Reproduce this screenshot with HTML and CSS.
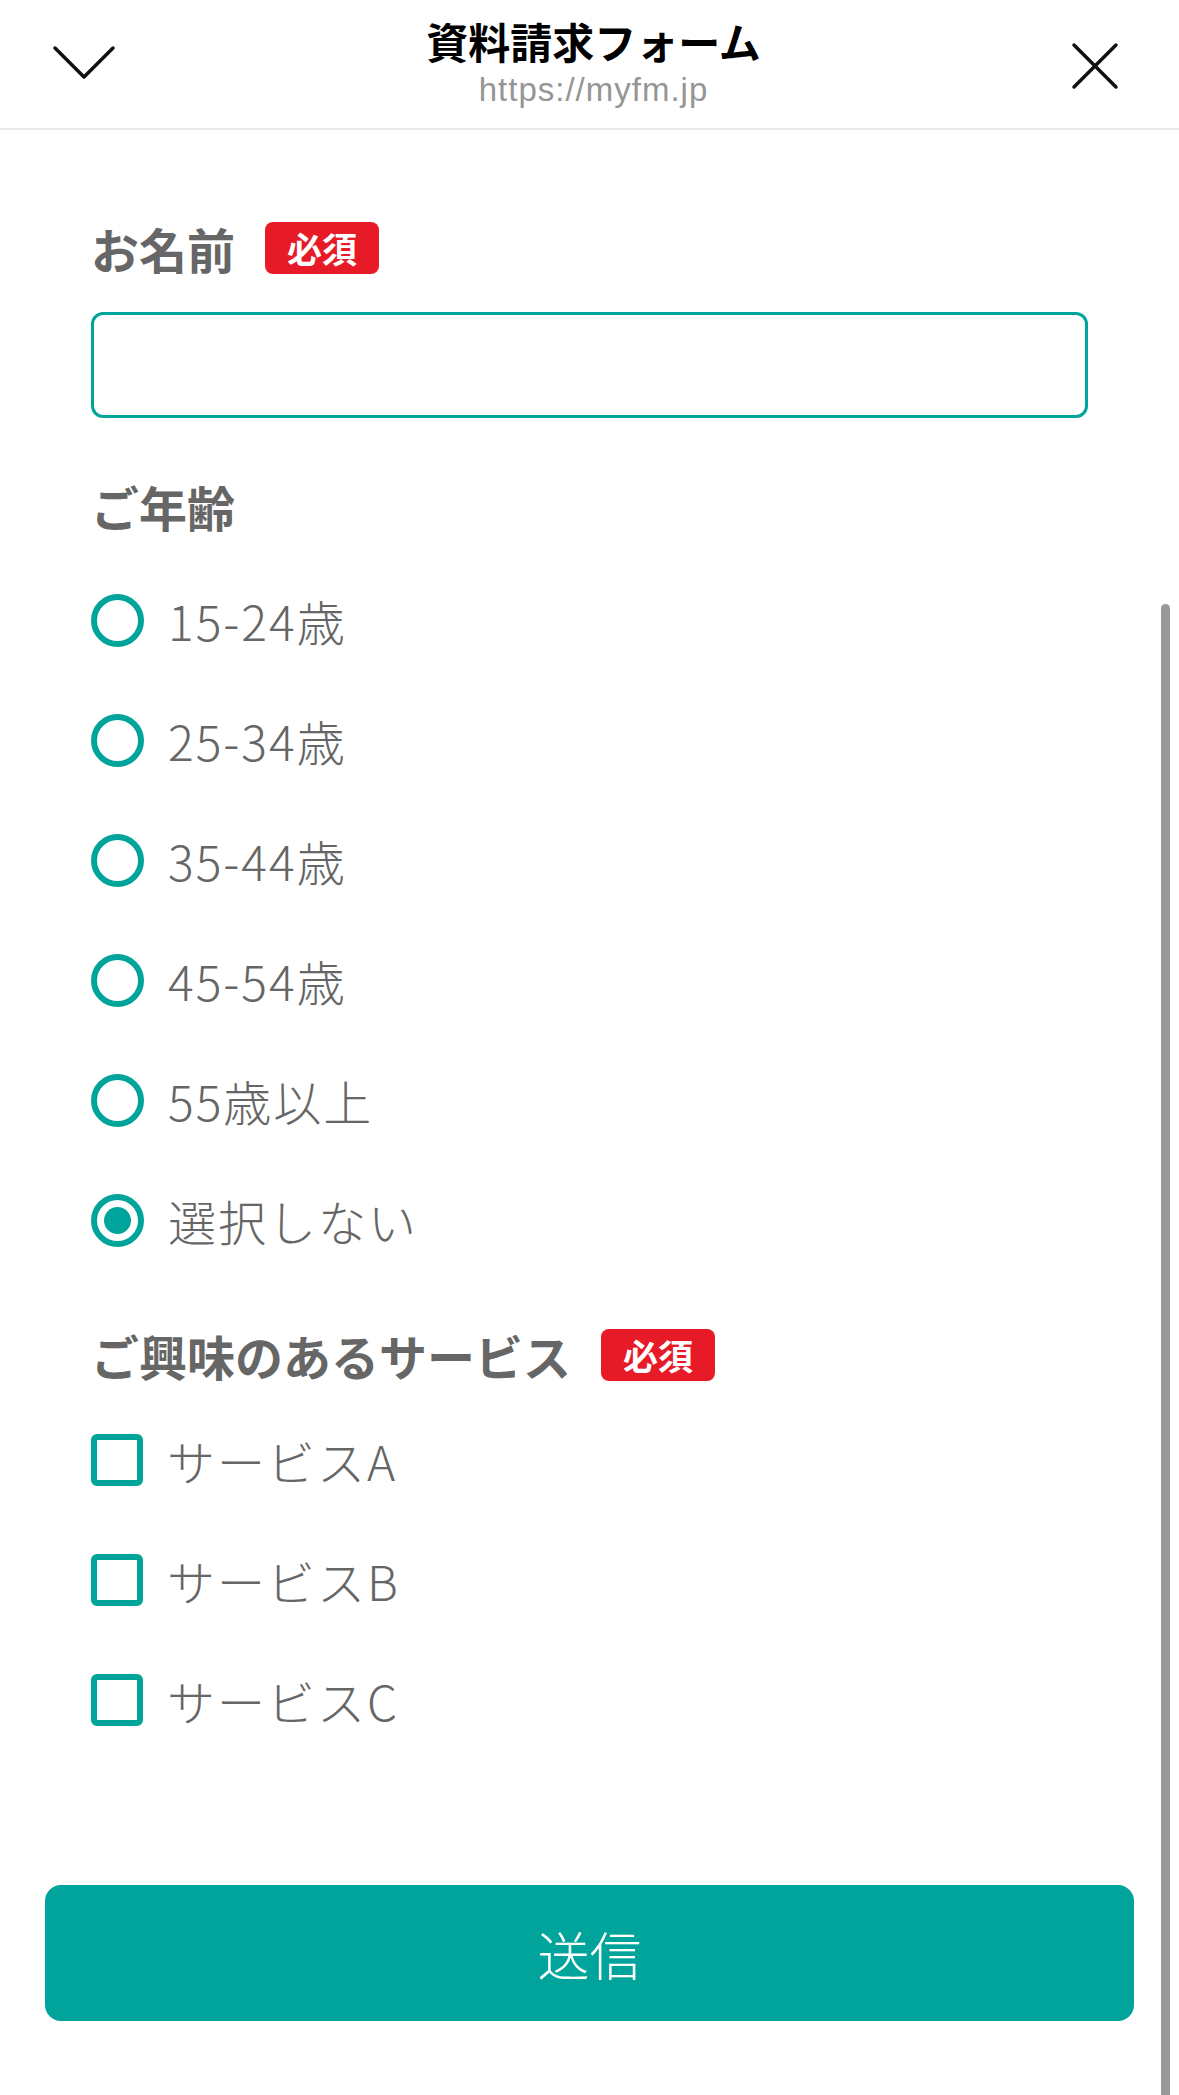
FILE: index.html
```html
<!DOCTYPE html>
<html lang="ja">
<head>
  <meta charset="UTF-8">
  <meta name="viewport" content="width=device-width, initial-scale=1.0">
  <title>資料請求フォーム</title>
  <link rel="stylesheet" href="styles.css">
</head>
<body>
  <header class="topbar">
    <button class="icon-btn" aria-label="閉じる">
      <svg width="64" height="36" viewBox="0 0 64 36"><path d="M3 3 L32 32 L61 3" fill="none" stroke="#111" stroke-width="3.5" stroke-linecap="round" stroke-linejoin="round"/></svg>
    </button>
    <div class="title-box">
      <div class="title">資料請求フォーム</div>
      <div class="url">https://myfm.jp</div>
    </div>
    <button class="icon-btn" aria-label="終了">
      <svg width="48" height="48" viewBox="0 0 48 48"><path d="M3 3 L45 45 M45 3 L3 45" fill="none" stroke="#111" stroke-width="3.5" stroke-linecap="round"/></svg>
    </button>
  </header>

  <form class="form">
    <div class="label-row">
      <span class="label">お名前</span>
      <span class="required">必須</span>
    </div>
    <input class="text-input" type="text">

    <div class="label-row age-label">
      <span class="label">ご年齢</span>
    </div>
    <div class="options">
      <label class="option"><span class="radio"></span><span class="option-text">15-24歳</span></label>
      <label class="option"><span class="radio"></span><span class="option-text">25-34歳</span></label>
      <label class="option"><span class="radio"></span><span class="option-text">35-44歳</span></label>
      <label class="option"><span class="radio"></span><span class="option-text">45-54歳</span></label>
      <label class="option"><span class="radio"></span><span class="option-text">55歳以上</span></label>
      <label class="option"><span class="radio checked"></span><span class="option-text">選択しない</span></label>
    </div>

    <div class="label-row service-label">
      <span class="label">ご興味のあるサービス</span>
      <span class="required">必須</span>
    </div>
    <div class="options checks">
      <label class="option"><span class="checkbox"></span><span class="option-text">サービスA</span></label>
      <label class="option"><span class="checkbox"></span><span class="option-text">サービスB</span></label>
      <label class="option"><span class="checkbox"></span><span class="option-text">サービスC</span></label>
    </div>
  </form>

  <div class="submit-wrap">
    <button class="submit" type="button">送信</button>
  </div>

  <div class="scroll-thumb"></div>
</body>
</html>
```

FILE: styles.css
```css
* {
  box-sizing: border-box;
}
body {
  margin: 0;
  background: #fff;
  font-family: "Noto Sans CJK JP", "Noto Sans", sans-serif;
  color: #666;
  overflow: hidden;
}
.topbar {
  height: 130px;
  border-bottom: 2px solid #e8e8e8;
  display: flex;
  align-items: center;
  justify-content: space-between;
  padding: 0 60px 0 52px;
}
.icon-btn {
  background: none;
  border: none;
  padding: 0;
  display: flex;
}
.icon-btn:first-child {
  margin-top: -2px;
}
.icon-btn:last-child {
  margin-top: 4px;
}
.title-box {
  text-align: center;
  margin-top: -2px;
}
.title {
  font-size: 42px;
  font-weight: bold;
  color: #000;
  line-height: 50px;
}
.url {
  font-family: "Liberation Sans", sans-serif;
  font-size: 33px;
  letter-spacing: 1px;
  color: #959595;
  line-height: 40px;
  margin-top: 4px;
}
.form {
  padding: 88px 91px 0;
}
.label-row {
  height: 60px;
  display: flex;
  align-items: center;
  gap: 30px;
}
.label {
  font-size: 48px;
  font-weight: bold;
  color: #666;
}
.required {
  background: #e61b27;
  color: #fff;
  font-size: 35px;
  font-weight: bold;
  border-radius: 8px;
  height: 52px;
  line-height: 52px;
  padding: 0 22px;
}
.text-input {
  display: block;
  width: 100%;
  height: 106px;
  margin-top: 34px;
  border: 3px solid #00a49a;
  border-radius: 12px;
  outline: none;
  font-size: 40px;
}
.age-label {
  margin-top: 58px;
}
.options {
  margin-top: 24px;
}
.option {
  height: 120px;
  display: flex;
  align-items: center;
  gap: 24px;
}
.option-text {
  font-size: 48px;
  font-weight: 300;
  letter-spacing: 2px;
  color: #666;
}
.radio {
  width: 53px;
  height: 53px;
  border: 6px solid #00a49a;
  border-radius: 50%;
  display: flex;
  align-items: center;
  justify-content: center;
}
.radio.checked::after {
  content: "";
  width: 27px;
  height: 27px;
  border-radius: 50%;
  background: #00a49a;
}
.service-label {
  margin-top: 45px;
}
.checks {
  margin-top: 15px;
}
.checkbox {
  width: 52px;
  height: 52px;
  border: 6px solid #00a49a;
  border-radius: 6px;
}
.submit-wrap {
  padding: 125px 45px 0;
}
.submit {
  width: 100%;
  height: 136px;
  border: none;
  border-radius: 16px;
  background: #00a49a;
  color: #fff;
  font-family: "Noto Sans CJK JP", sans-serif;
  font-size: 52px;
  font-weight: 300;
}
.scroll-thumb {
  position: fixed;
  left: 1161px;
  top: 604px;
  width: 9px;
  height: 1600px;
  border-radius: 5px;
  background: #999;
}
```
